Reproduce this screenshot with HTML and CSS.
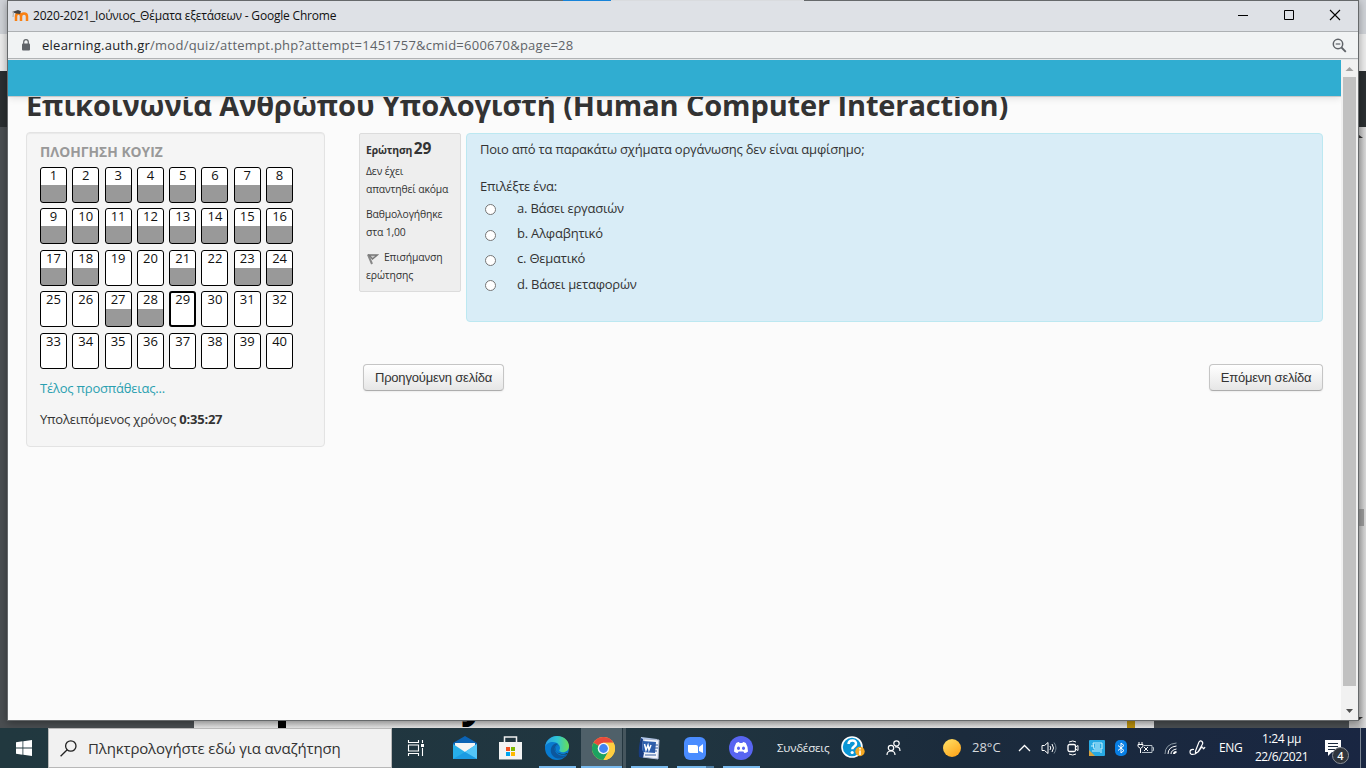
FILE: index.html
```html
<!DOCTYPE html>
<html lang="el">
<head>
<meta charset="utf-8">
<title>2020-2021_Ιούνιος_Θέματα εξετάσεων</title>
<link rel="stylesheet" href="styles.css">
</head>
<body>
<div class="desktop">
  <div class="backdrop">
    <div class="back-tabs"></div>
    <div class="back-bar"></div>
    <div class="back-dark"></div>
    <div class="back-page"><i class="back-stem"></i><span class="back-letter">y</span><i class="back-gold"></i></div>
    <div class="back-scroll"><i class="back-up"></i><i class="back-thumb"></i><i class="back-down"></i></div>
  </div>
  <section class="window">
    <header class="titlebar">
      <svg class="favicon" width="17" height="14" viewBox="0 0 17 14"><path d="M4 12V7.500Q4 4.500 6.500 4.500T9 7.500V12M9 7.500Q9 4.500 12 4.500T15 7.500V12" fill="none" stroke="#f98012" stroke-width="2.500"/><path d="M0 3 6 1 9 2.300 8 5 4 4.500z" fill="#444"/><path d="M1.500 3 1 8" stroke="#aaa"/></svg>
      <span class="win-title">2020-2021_Ιούνιος_Θέματα εξετάσεων - Google Chrome</span>
      <div class="win-controls">
        <svg width="46" height="30" viewBox="0 0 46 30"><path d="M18 14.500h10" stroke="#000"/></svg>
        <svg width="46" height="30" viewBox="0 0 46 30"><path d="M18.500 9.500h9v9h-9z" fill="none" stroke="#000"/></svg>
        <svg width="46" height="30" viewBox="0 0 46 30"><path d="m18 9 10 10M28 9 18 19" stroke="#000" stroke-width="1.100"/></svg>
      </div>
    </header>
    <div class="addressbar">
      <svg width="10" height="12" viewBox="0 0 10 12"><rect x="1" y="4.500" width="8" height="7" rx="1" fill="#5f6368"/><path d="M2.700 5V3a2.300 2.300 0 0 1 4.600 0v2" fill="none" stroke="#5f6368" stroke-width="1.200"/></svg>
      <span class="url"><b>elearning.auth.gr</b>/mod/quiz/attempt.php?attempt=1451757&amp;cmid=600670&amp;page=28</span>
      <svg class="zoom" width="15" height="15" viewBox="0 0 15 15" fill="none" stroke="#5f6368"><circle cx="6" cy="6" r="4.700" stroke-width="1.500"/><path d="m9.500 9.500 4.300 4.300" stroke-width="1.800"/><path d="M3.700 6h4.600" stroke-width="1.200"/></svg>
    </div>
    <div class="viewport">
      <main class="page">
        <div class="navbar"></div>
        <h1>Επικοινωνία Ανθρώπου Υπολογιστή (Human Computer Interaction)</h1>
        <div class="columns">
          <aside class="quiznav">
            <h2>ΠΛΟΗΓΗΣΗ ΚΟΥΙΖ</h2>
            <div class="cells">
              <a class="done">1</a><a class="done">2</a><a class="done">3</a><a class="done">4</a><a class="done">5</a><a class="done">6</a><a class="done">7</a><a class="done">8</a>
              <a class="done">9</a><a class="done">10</a><a class="done">11</a><a class="done">12</a><a class="done">13</a><a class="done">14</a><a class="done">15</a><a class="done">16</a>
              <a class="done">17</a><a class="done">18</a><a>19</a><a>20</a><a class="done">21</a><a>22</a><a class="done">23</a><a class="done">24</a>
              <a>25</a><a>26</a><a class="done">27</a><a class="done">28</a><a class="current">29</a><a>30</a><a>31</a><a>32</a>
              <a>33</a><a>34</a><a>35</a><a>36</a><a>37</a><a>38</a><a>39</a><a>40</a>
            </div>
            <a class="finish">Τέλος προσπάθειας...</a>
            <p class="timer">Υπολειπόμενος χρόνος <b>0:35:27</b></p>
          </aside>
          <div class="content">
            <div class="question">
              <div class="info">
                <h3>Ερώτηση <span>29</span></h3>
                <p>Δεν έχει<br>απαντηθεί ακόμα</p>
                <p>Βαθμολογήθηκε<br>στα 1,00</p>
                <p><svg class="flag" width="12" height="12" viewBox="0 0 12 12"><path d="M1 1.500 5 11" stroke="#888" stroke-width="2"/><path d="M2 2h8.300L5.500 6z" fill="#ccc" stroke="#777" stroke-width="1.300"/></svg>Επισήμανση<br>ερώτησης</p>
              </div>
              <div class="formulation">
                <p class="qtext">Ποιο από τα παρακάτω σχήματα οργάνωσης δεν είναι αμφίσημο;</p>
                <p class="prompt">Επιλέξτε ένα:</p>
                <label><i class="radio"></i><span>a. Βάσει εργασιών</span></label>
                <label><i class="radio"></i><span>b. Αλφαβητικό</span></label>
                <label><i class="radio"></i><span>c. Θεματικό</span></label>
                <label><i class="radio"></i><span>d. Βάσει μεταφορών</span></label>
              </div>
            </div>
            <div class="buttons"><button class="prev">Προηγούμενη σελίδα</button><button class="next">Επόμενη σελίδα</button></div>
          </div>
        </div>
      </main>
      <div class="scrollbar">
        <svg width="17" height="17" viewBox="0 0 17 17"><path d="M4.500 11 8.500 7l4 4z" fill="#a0a0a0"/></svg>
        <i class="thumb"></i>
        <svg width="17" height="17" viewBox="0 0 17 17"><path d="m5 6 3.500 4L12 6z" fill="#505050"/></svg>
      </div>
    </div>
  </section>
  <div class="top-edge"><i class="back-accent"></i><i class="back-tab"></i></div>
  <footer class="taskbar">
    <div class="start"><svg width="16" height="16" viewBox="0 0 16 16" fill="#fff"><path d="M0 2.200 6.500 1.300v6.300H0zM7.300 1.200 16 0v7.600H7.300zM0 8.400h6.500v6.300L0 13.800zM7.300 8.400H16V16l-8.700-1.200z"/></svg></div>
    <div class="search"><svg width="17" height="17" viewBox="0 0 17 17" fill="none" stroke="#222" stroke-width="1.300"><circle cx="10.800" cy="6" r="5.200"/><path d="M7.200 9.800.6 16.300"/></svg><span>Πληκτρολογήστε εδώ για αναζήτηση</span></div>
    <div class="app taskview"><svg width="18" height="16" viewBox="0 0 18 16" fill="none" stroke="#fff" stroke-width="1.100"><path d="M1.500 0v2.500h10V0M1.500 16v-2.500h10V16M1.500 5h10v6h-10zM15.500 0v3M15.500 8v8"/><path d="M14 4h3v3h-3z" fill="#fff" stroke="none"/></svg></div>
    <div class="app"><svg width="24" height="24" viewBox="0 0 24 24"><path d="M0 7 12 0l12 7v5H0z" fill="#0b63b5"/><path d="M2 7h20v9H2z" fill="#f4f4f4"/><path d="m0 8 12 8 12-8v15H0z" fill="#27aee9"/><path d="m12 16 12-8v15z" fill="#54c6f8"/><path d="m12 16 12 7H0z" fill="#1b9be3"/></svg></div>
    <div class="app store"><svg width="23" height="24" viewBox="0 0 23 24"><path d="M5.500 7V1h12v6" fill="none" stroke="#eee" stroke-width="1.500"/><path d="M0 6h23v17.500H0z" fill="#f3f3f3"/><path d="M7 11h4v4H7z" fill="#f25022"/><path d="M12 11h4v4h-4z" fill="#7fba00"/><path d="M7 16h4v4H7z" fill="#00a4ef"/><path d="M12 16h4v4h-4z" fill="#ffb900"/></svg></div>
    <div class="app running"><svg width="24" height="24" viewBox="0 0 24 24"><defs><linearGradient id="edgeTop"><stop stop-color="#2b9be2"/><stop offset=".5" stop-color="#2fc5d5"/><stop offset="1" stop-color="#69df55"/></linearGradient></defs><circle cx="12" cy="12" r="12" fill="#087bd0"/><path d="M0 11C1 4 6 0 12 0c8 0 12 6 12 10 0 5-4 7-8 6-3-1-1-2-1-4 0-3-3-6-7-6-4 0-7 2-8 5z" fill="url(#edgeTop)"/><path d="M8 9c-3 3-3 8 0 11 4 4 11 3 14-1-5 2-10 0-12-4-1-3 0-5 3-7-2-1-4 0-5 1z" fill="#0c579d"/><path d="M14 9c-4 1-5 5-2 7 4 3 8 2 10 1l1 1c-4 1-9 1-11-2-3-3-1-6 2-7z" fill="#203641"/></svg></div>
    <div class="app running active"><svg width="23" height="23" viewBox="0 0 24 24"><circle cx="12" cy="12" r="12" fill="#ffcd40"/><path d="M12 12 1.600 6A12 12 0 0 1 22.400 6H12z" fill="#e94a3c"/><path d="M1.600 6A12 12 0 0 0 12 24l5.200-9z" fill="#1da260"/><path d="M12 6h10.400A12 12 0 0 1 12 24l5.200-9z" fill="#ffcd40"/><circle cx="12" cy="12" r="6" fill="#f5f5f5"/><circle cx="12" cy="12" r="4.600" fill="#4284f4"/></svg></div>
    <div class="app running"><svg width="23" height="23" viewBox="0 0 23 23"><path d="m3 0 16 2-2 18-16-1z" fill="#b4cbee"/><path d="m6 2 15 1-1 19-16-2z" fill="#f2f5fb" stroke="#aebbd6"/><path d="m5 4 13 1-1 11-13-1z" fill="#2d5fae"/><path d="m6.500 7 1.500 6 2-5 1 5 2-5" fill="none" stroke="#fff" stroke-width="1.500"/><path d="M14 8h6M14 11h6M14 14h5M7 18h11" stroke="#335b9d"/><path d="M3 1Q0 10 1 20l4 1 1-5-2-3 1-11z" fill="#183c80"/></svg></div>
    <div class="app running multi"><svg width="22" height="23" viewBox="0 0 22 23"><rect width="22" height="23" rx="6" fill="#4a8cff"/><path d="M4 8h8q2 0 2 2v6H6q-2 0-2-2zM15 10l4-3v9l-4-2z" fill="#fff"/></svg></div>
    <div class="app running"><svg width="24" height="24" viewBox="0 0 24 24"><circle cx="12" cy="12" r="12" fill="#5865f2"/><path d="M7.200 7Q9 6 10 6l.6 1.100h2.800L14 6q1 0 2.800 1 2.400 4 2.200 8.400-2 1.600-3.700 1.700l-.9-1.500H9.600L8.700 17.100Q7 17 5 15.400 4.800 11 7.200 7z" fill="#fff"/><ellipse cx="9.500" cy="12.300" rx="1.500" ry="1.700" fill="#5865f2"/><ellipse cx="14.500" cy="12.300" rx="1.500" ry="1.700" fill="#5865f2"/></svg></div>
    <span class="links">Συνδέσεις</span>
    <div class="slot help"><svg width="24" height="24" viewBox="0 0 24 24"><circle cx="11" cy="11" r="10" fill="#0a96d5" stroke="#fff" stroke-width="1.600"/><path d="M7.500 8c.3-5 8-4.500 7.500 0-.3 2.500-3.700 2.500-3.700 5.200" fill="none" stroke="#fff" stroke-width="2.500"/><circle cx="11.200" cy="16.500" r="1.600" fill="#fff"/><circle cx="19" cy="15.500" r="4.700" fill="#f6a821"/><path d="M19 14.500V19M19 12v1.500" stroke="#fff" stroke-width="1.500"/></svg></div>
    <div class="slot people"><svg width="15" height="16" viewBox="0 0 15 16" fill="none" stroke="#fff" stroke-width="1.200"><circle cx="10.500" cy="3.500" r="2.700"/><circle cx="5" cy="8" r="2.700"/><path d="M1 15q0-4 4-4t4 4M9 7q5-1 5 4"/></svg></div>
    <div class="slot weather"><i class="sun"></i></div>
    <span class="temp">28°C</span>
    <div class="slot caret"><svg width="13" height="8" viewBox="0 0 13 8"><path d="m1 7 5.500-5.500L12 7" fill="none" stroke="#fff" stroke-width="1.300"/></svg></div>
    <div class="slot"><svg width="17" height="14" viewBox="0 0 17 14" fill="none" stroke="#fff"><path d="M1 4.500h2.500L7 1.500v11L3.500 9.500H1z"/><path d="M9 5q1.500 2 0 4M11 3q3 4 0 8"/><path d="M13 1.500q4 5.500 0 11" stroke="#748491"/></svg></div>
    <div class="slot"><svg width="12" height="16" viewBox="0 0 12 16" fill="none" stroke="#fff"><rect x="1" y="4.500" width="7.500" height="7" rx="1.500" stroke-width="1.300"/><path d="m8.500 7 2.500-1.500v5L8.500 9M2 2q4-2 7 0M2 14q4 2 7 0"/></svg></div>
    <div class="slot"><svg width="16" height="16" viewBox="0 0 16 16"><rect width="16" height="16" rx="1" fill="#27a9e3"/><path d="M4 3h9v6H5zM3 11h8M12 10v3M2 6h2M6 5h5M6 7h5" fill="none" stroke="#c9f2ff"/><path d="m0 10 6 6H0z" fill="#d7a23e"/></svg></div>
    <div class="slot"><svg width="12" height="16" viewBox="0 0 12 16"><rect width="12" height="16" rx="5" fill="#087fe5"/><path d="m3 5.500 6 5L6 13V3l3 2.500-6 5" fill="none" stroke="#fff"/></svg></div>
    <div class="slot"><svg width="17" height="13" viewBox="0 0 17 13" fill="none" stroke="#fff"><path d="M2 0v2M5 0v2M1 2.500h5v2l-2.500 2-2.500-2zM3.500 6.500V11"/><path d="M7 3.500h8v7H5M15.500 5.500h1v3h-1" stroke="#b6c0c8"/><path d="m7 5 4 4M11 5 7 9"/></svg></div>
    <div class="slot wifi"><svg width="13" height="13" viewBox="0 0 13 13" fill="none" stroke="#fff"><path d="M1 12Q1 2 12.500 1" stroke="#8d9aa5"/><path d="M4 12q0-7 8.500-8M7 12q0-4 5.500-5"/><path d="M10 12q0-2 2.500-2" stroke-width="2"/></svg></div>
    <div class="slot pen"><svg width="17" height="16" viewBox="0 0 17 16" fill="none" stroke="#fff" stroke-width="1.200"><path d="m6.500 11 3.500-9q1.500-2 3-.5T13 5l-4 7-2.500 1zM5 9.500q-4-.5-4 2.500 0 3.500 5 2 4-2 6-6 1.500-2 2 0t2-1"/></svg></div>
    <span class="lang">ENG</span>
    <div class="clock"><span>1:24 μμ</span><span>22/6/2021</span></div>
    <div class="notify"><svg width="16" height="16" viewBox="0 0 16 16"><path d="M0 0h16v12H7l-4 4v-4H0z" fill="#fff"/><path d="M3 3.500h10M3 6.500h10M3 9.500h7" stroke="#1b2a3d"/></svg><b>4</b></div>
  </footer>
</div>
</body>
</html>
```
FILE: styles.css
```css
* { box-sizing: border-box; }
body { margin: 0; overflow: hidden; }
i, b, h1, h2, h3, p { margin: 0; font-style: normal; }
svg { display: block; flex: none; }

.desktop { position: relative; width: 1366px; height: 768px; overflow: hidden; background: #4a4e51; font-family: "Open Sans", "Noto Sans", sans-serif; }
.backdrop { position: absolute; inset: 0; }
.back-tabs { height: 34px; background: #cfd2d7; }
.top-edge { position: absolute; left: 563px; top: 0; display: flex; }
.back-accent { width: 48px; height: 1px; background: #1683d9; }
.back-tab { width: 193px; height: 1px; background: #d9dbde; }
.back-bar { height: 37px; background: #ececec; }
.back-dark { height: 56px; background: #2b2f31; }
.back-page { position: absolute; left: 194px; top: 700px; width: 960px; height: 28px; overflow: hidden; background: linear-gradient(#ccc 20px, #e6e6e6 28px); }
.back-stem { position: absolute; left: 84px; top: 20px; width: 8px; height: 8px; background: #000; }
.back-gold { position: absolute; left: 933px; top: 20px; width: 8px; height: 8px; background: #b88f0d; }
.back-letter { position: absolute; left: 267px; top: -23px; font: bold 44px/44px "Open Sans", sans-serif; color: #000; }
.back-scroll { position: absolute; left: 1349px; top: 127px; width: 17px; height: 601px; background: linear-gradient(90deg, #b8b8b8 9px, #dadada); }
.back-thumb { position: absolute; left: 9px; top: 382px; width: 6px; height: 17px; background: #999; }
.back-up { position: absolute; left: 6px; top: 8px; border: 4px solid transparent; border-top: 0; border-bottom: 3px solid #333; }
.back-down { position: absolute; left: 6px; bottom: 8px; border: 4px solid transparent; border-bottom: 0; border-top: 3px solid #333; }

.window { position: absolute; left: 7px; top: 0; width: 1352px; height: 721px; border: 1px solid #66696b; box-shadow: 0 2px 8px rgba(0,0,0,.35); display: flex; flex-direction: column; background: #fbfbfb; }
.titlebar { height: 31px; background: #dee1e6; border-bottom: 1px solid #adb0b3; display: flex; align-items: center; padding-left: 4px; flex: none; }
.favicon { margin-right: 4px; }
.win-title { font-size: 12px; line-height: 30px; color: #111; white-space: nowrap; letter-spacing: -.2px; }
.win-controls { display: flex; margin-left: auto; }
.addressbar { height: 27px; background: #f1f3f4; border-bottom: 1px solid #b0b3b5; display: flex; align-items: center; padding: 0 11px 0 13px; flex: none; }
.url { margin-left: 11px; font-size: 13px; letter-spacing: .255px; color: #5f6368; white-space: nowrap; }
.url b { font-weight: 400; color: #202124; }
.zoom { margin-left: auto; }
.viewport { flex: 1; display: flex; min-height: 0; }
.page { position: relative; flex: 1; overflow: hidden; background: #fbfbfb; padding: 0 18px; color: #333; }
.navbar { position: relative; z-index: 1; margin: 0 -18px; border-top: 1px solid #e6e7e8; height: 37px; background: #30add1; box-shadow: 0 1px #c9c9c9, 0 1px 8px rgba(0,0,0,.15); }
h1 { font-size: 29px; line-height: 40px; height: 36px; margin-top: -11px; white-space: nowrap; font-weight: 700; letter-spacing: -.13px; }
.columns { display: flex; align-items: flex-start; margin-top: 11px; }
.quiznav { width: 299px; height: 315px; border: 1px solid #e3e3e3; border-radius: 4px; background: #f5f5f5; box-shadow: inset 0 1px 1px rgba(0,0,0,.05); padding: 9px 13px; }
h2 { font-size: 13.800px; line-height: 20px; color: #999; font-weight: 700; }
.cells { display: grid; grid-template-columns: repeat(8, 27px); column-gap: 5.3px; row-gap: 5.4px; padding-top: 5px; }
.cells a { height: 36px; border: 1px solid #000; border-radius: 3px; background: #fff; font-size: 13px; line-height: 14px; text-align: center; color: #111; }
.cells .done { background: linear-gradient(#fff 17px, #999 17px); }
.cells .current { border-width: 2px; line-height: 12px; }
.finish { display: block; margin-top: 9px; font-size: 13px; line-height: 20px; color: #2a9fb0; letter-spacing: -.2px; }
.timer { margin-top: 11px; font-size: 13px; line-height: 20px; letter-spacing: -.2px; }
.content { flex: 1; margin-left: 34px; }
.question { display: flex; align-items: flex-start; gap: 5px; padding-top: 1px; }
.info { width: 102px; height: 159px; background: #eee; border: 1px solid #dcdcdc; border-radius: 2px; padding: 4px 6px; font-size: 10.4px; line-height: 18px; white-space: nowrap; letter-spacing: -.15px; }
.info h3 { font-size: 10.4px; line-height: 20px; font-weight: 700; }
.info h3 span { font-size: 15.500px; margin-left: -1px; }
.info p { margin: 2px 0 7px; }
.info p + p { margin-top: 0; }
.info .flag { display: inline-block; vertical-align: -4px; margin: 0 5px 0 1px; }
.formulation { flex: 1; height: 189px; background: #d9edf7; border: 1px solid #bce8f1; border-radius: 4px; padding: 5px 13px; font-size: 13px; line-height: 20px; letter-spacing: -.21px; }
.prompt { margin-top: 17px; margin-bottom: 1px; }
.formulation label { display: flex; align-items: center; height: 25.400px; line-height: 20px; padding-left: 5px; }
.formulation label span { margin-left: 21px; margin-top: -4px; }
.radio { width: 11px; height: 11px; border: 1px solid #767676; border-radius: 50%; background: #fff; }
.buttons { display: flex; justify-content: space-between; margin: 42px 0 0 4px; }
button { height: 27px; padding: 0; border: 1px solid #c5c5c5; border-bottom-color: #adadad; border-radius: 4px; background: linear-gradient(#fff, #e6e6e6); font: 13px "Liberation Sans", sans-serif; letter-spacing: -.2px; color: #333; box-shadow: 0 1px 2px rgba(0,0,0,.06); }
.prev { width: 141px; }
.next { width: 114px; }
.scrollbar { width: 17px; background: #f1f1f1; border-top: 1px solid #e6e7e8; display: flex; flex-direction: column; align-items: center; }
.thumb { width: 13px; height: 609px; background: #c1c1c1; }
.scrollbar svg:last-child { margin-top: auto; }

.taskbar { position: absolute; left: 0; top: 728px; width: 1366px; height: 40px; display: flex; background: linear-gradient(90deg, #21383f, #203540 50%, #1b2b3c 70%, #192642); color: #fff; }
.start { width: 48px; display: flex; align-items: center; justify-content: center; }
.search { width: 344px; border: 1px solid #b8b8b8; background: #f1f1f1; color: #333; display: flex; align-items: center; padding-left: 11px; font-size: 15px; white-space: nowrap; }
.search span { margin-left: 11px; letter-spacing: -.15px; }
.app { width: 46px; display: flex; align-items: center; justify-content: center; flex: none; }
.taskview { width: 48px; margin-right: 2px; }
.store { padding-right: 2px; }
.running { background: linear-gradient(#78b9ed, #78b9ed) 5px 38px / 37px 2px no-repeat; }
.active { background: linear-gradient(#78b9ed, #78b9ed) 1px 38px / 41px 2px no-repeat, linear-gradient(90deg, transparent 1px, #4f6069 1px, #4f6069 42px, #24363f 42px, #24363f 43px, #46565e 43px); }
.multi { background: linear-gradient(90deg, #78b9ed 29px, #4d7da4 29px) 5px 38px / 37px 2px no-repeat; }
.links { width: 74px; padding-left: 13px; font-size: 11.500px; line-height: 39px; white-space: nowrap; color: #e9edef; letter-spacing: -.2px; }
.slot { width: 24px; display: flex; align-items: center; justify-content: center; flex: none; }
.help { width: 30px; }
.people { width: 50px; }
.weather { width: 68px; }
.sun { width: 18px; height: 18px; border-radius: 50%; background: linear-gradient(145deg, #ffe36a, #ff9e12); }
.temp { width: 40px; margin-left: -14px; font-size: 13px; line-height: 39px; white-space: nowrap; color: #d5d9dd; }
.caret { width: 25px; }
.wifi { width: 27px; }
.pen { width: 26px; }
.lang { width: 34px; padding-left: 9px; font-size: 12px; line-height: 39px; letter-spacing: -.4px; }
.clock { width: 75px; display: flex; flex-direction: column; align-items: center; padding-top: 2px; font-size: 12px; line-height: 18px; white-space: nowrap; letter-spacing: -.4px; }
.notify { position: relative; width: 42px; border-right: 1px solid #7a8492; padding: 12px 0 0 6px; }
.notify b { position: absolute; left: 13px; top: 19px; width: 17px; height: 17px; border: 1px solid #8a8f96; border-radius: 50%; background: #30353c; font-size: 11px; font-weight: 600; line-height: 15px; text-align: center; }
```
